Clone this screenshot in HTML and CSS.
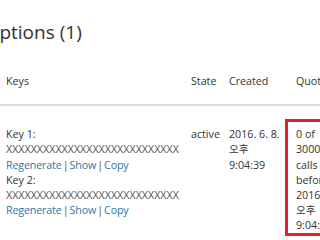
FILE: index.html
```html
<!DOCTYPE html>
<html>
  <head>
    <title>Subscriptions</title>
    <link rel="stylesheet" href="styles.css">
  </head>
  <body>
    <div class="page">
      <h2 class="title">Subscriptions (1)</h2>

      <table class="subs">
        <colgroup>
          <col class="col-keys">
          <col class="col-state">
          <col class="col-created">
          <col class="col-quota">
        </colgroup>
        <thead>
          <tr>
            <th>Keys</th>
            <th>State</th>
            <th>Created</th>
            <th class="quota-head">Quota</th>
          </tr>
        </thead>
        <tbody>
          <tr>
            <td>
              <div>Key 1:</div>
              <div class="key">XXXXXXXXXXXXXXXXXXXXXXXXXXXX</div>
              <div class="actions">
                <a href="#">Regenerate</a> | <a href="#">Show</a> | <a href="#">Copy</a>
              </div>
              <div>Key 2:</div>
              <div class="key">XXXXXXXXXXXXXXXXXXXXXXXXXXXX</div>
              <div class="actions">
                <a href="#">Regenerate</a> | <a href="#">Show</a> | <a href="#">Copy</a>
              </div>
            </td>
            <td>active</td>
            <td>2016. 6. 8.<br>오후<br>9:04:39</td>
            <td class="quota-cell">
              <div class="quota-box">0 of<br>3000<br>calls<br>before<br>2016. 6. 8.<br>오후<br>9:04:39</div>
            </td>
          </tr>
        </tbody>
      </table>
    </div>
  </body>
</html>
```

FILE: styles.css
```css
html,
body {
  margin: 0;
  overflow: hidden;
  background-color: #fff;
}

body {
  font-family: "Open Sans", "Noto Sans CJK KR", sans-serif;
  font-size: 10.7px;
  line-height: 15.2px;
  color: #333;
}

.page {
  width: 360px;
}

.title {
  font-size: 19px;
  font-weight: normal;
  line-height: 22px;
  margin: 21px 0 23px -65px;
  color: #333;
  white-space: nowrap;
}

.subs {
  table-layout: fixed;
  border-collapse: collapse;
  width: 352px;
  margin-left: -2px;
}

.col-keys {
  width: 185px;
}

.col-state {
  width: 38px;
}

.col-created {
  width: 64px;
}

.subs th {
  font-weight: normal;
  text-align: left;
  padding: 8px 0 15px 8px;
  border-bottom: 2px solid #ddd;
  white-space: nowrap;
}

.subs th.quota-head {
  padding-left: 11px;
}

.subs td {
  vertical-align: top;
  padding: 21px 0 8px 8px;
}

.key {
  color: #555;
  white-space: nowrap;
}

.actions {
  color: #555;
  white-space: nowrap;
  letter-spacing: -0.15px;
  word-spacing: -1.5px;
}

.actions a {
  color: #2a79a6;
  text-decoration: none;
}

.subs td.quota-cell {
  padding: 13px 0 0 0;
}

.quota-box {
  border: 3px solid #e51f2b;
  padding: 5px 8px 0;
  height: 106px;
  overflow: hidden;
  white-space: nowrap;
}
```
